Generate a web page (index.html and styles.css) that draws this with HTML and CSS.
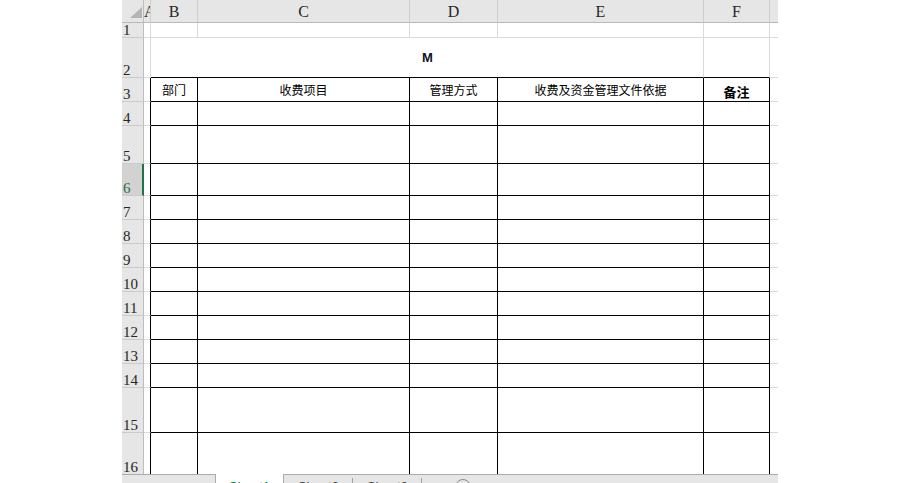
FILE: index.html
```html
<!DOCTYPE html>
<html lang="zh-CN">
<head>
    <meta charset="UTF-8">
    <meta name="viewport" content="width=device-width, initial-scale=1.0">
    <title>Sheet1</title>
    <link rel="stylesheet" href="styles.css">
</head>
<body>
    <div class="page">
        <div class="sheet">
            <!-- column letters -->
            <div class="row r-head">
                <div class="cell hd corner">
                    <svg width="12" height="11" viewBox="0 0 12 11"><polygon points="12,0 12,11 0,11" fill="#b4b4b4"/></svg>
                </div>
                <div class="cell col ca col-a">A</div>
                <div class="cell col cb">B</div>
                <div class="cell col cc">C</div>
                <div class="cell col cd">D</div>
                <div class="cell col ce">E</div>
                <div class="cell col cf">F</div>
                <div class="cell col cg"></div>
            </div>

            <div class="row h15">
                <div class="cell hd">1</div>
                <div class="cell ca"></div>
                <div class="cell cb"></div>
                <div class="cell cc"></div>
                <div class="cell cd"></div>
                <div class="cell ce"></div>
                <div class="cell cf"></div>
                <div class="cell cg"></div>
            </div>

            <div class="row h40">
                <div class="cell hd">2</div>
                <div class="cell ca"></div>
                <div class="cell merge top-edge"><span class="title">M</span></div>
                <div class="cell cf top-edge"></div>
                <div class="cell cg"></div>
            </div>

            <div class="row h24">
                <div class="cell hd">3</div>
                <div class="cell ca edge"></div>
                <div class="cell cb tb"><span class="txt">部门</span></div>
                <div class="cell cc tb"><span class="txt">收费项目</span></div>
                <div class="cell cd tb"><span class="txt">管理方式</span></div>
                <div class="cell ce tb"><span class="txt">收费及资金管理文件依据</span></div>
                <div class="cell cf tb bottom"><span class="txt strong">备注</span></div>
                <div class="cell cg"></div>
            </div>

            <div class="row h24">
                <div class="cell hd">4</div>
                <div class="cell ca edge"></div>
                <div class="cell cb tb"></div>
                <div class="cell cc tb"></div>
                <div class="cell cd tb"></div>
                <div class="cell ce tb"></div>
                <div class="cell cf tb"></div>
                <div class="cell cg"></div>
            </div>

            <div class="row h38">
                <div class="cell hd">5</div>
                <div class="cell ca edge"></div>
                <div class="cell cb tb"></div>
                <div class="cell cc tb"></div>
                <div class="cell cd tb"></div>
                <div class="cell ce tb"></div>
                <div class="cell cf tb"></div>
                <div class="cell cg"></div>
            </div>

            <div class="row h32">
                <div class="cell hd sel">6</div>
                <div class="cell ca edge"></div>
                <div class="cell cb tb"></div>
                <div class="cell cc tb"></div>
                <div class="cell cd tb"></div>
                <div class="cell ce tb"></div>
                <div class="cell cf tb"></div>
                <div class="cell cg"></div>
            </div>

            <div class="row h24">
                <div class="cell hd">7</div>
                <div class="cell ca edge"></div>
                <div class="cell cb tb"></div>
                <div class="cell cc tb"></div>
                <div class="cell cd tb"></div>
                <div class="cell ce tb"></div>
                <div class="cell cf tb"></div>
                <div class="cell cg"></div>
            </div>

            <div class="row h24">
                <div class="cell hd">8</div>
                <div class="cell ca edge"></div>
                <div class="cell cb tb"></div>
                <div class="cell cc tb"></div>
                <div class="cell cd tb"></div>
                <div class="cell ce tb"></div>
                <div class="cell cf tb"></div>
                <div class="cell cg"></div>
            </div>

            <div class="row h24">
                <div class="cell hd">9</div>
                <div class="cell ca edge"></div>
                <div class="cell cb tb"></div>
                <div class="cell cc tb"></div>
                <div class="cell cd tb"></div>
                <div class="cell ce tb"></div>
                <div class="cell cf tb"></div>
                <div class="cell cg"></div>
            </div>

            <div class="row h24">
                <div class="cell hd">10</div>
                <div class="cell ca edge"></div>
                <div class="cell cb tb"></div>
                <div class="cell cc tb"></div>
                <div class="cell cd tb"></div>
                <div class="cell ce tb"></div>
                <div class="cell cf tb"></div>
                <div class="cell cg"></div>
            </div>

            <div class="row h24">
                <div class="cell hd">11</div>
                <div class="cell ca edge"></div>
                <div class="cell cb tb"></div>
                <div class="cell cc tb"></div>
                <div class="cell cd tb"></div>
                <div class="cell ce tb"></div>
                <div class="cell cf tb"></div>
                <div class="cell cg"></div>
            </div>

            <div class="row h24">
                <div class="cell hd">12</div>
                <div class="cell ca edge"></div>
                <div class="cell cb tb"></div>
                <div class="cell cc tb"></div>
                <div class="cell cd tb"></div>
                <div class="cell ce tb"></div>
                <div class="cell cf tb"></div>
                <div class="cell cg"></div>
            </div>

            <div class="row h24">
                <div class="cell hd">13</div>
                <div class="cell ca edge"></div>
                <div class="cell cb tb"></div>
                <div class="cell cc tb"></div>
                <div class="cell cd tb"></div>
                <div class="cell ce tb"></div>
                <div class="cell cf tb"></div>
                <div class="cell cg"></div>
            </div>

            <div class="row h24">
                <div class="cell hd">14</div>
                <div class="cell ca edge"></div>
                <div class="cell cb tb"></div>
                <div class="cell cc tb"></div>
                <div class="cell cd tb"></div>
                <div class="cell ce tb"></div>
                <div class="cell cf tb"></div>
                <div class="cell cg"></div>
            </div>

            <div class="row h45">
                <div class="cell hd">15</div>
                <div class="cell ca edge"></div>
                <div class="cell cb tb"></div>
                <div class="cell cc tb"></div>
                <div class="cell cd tb"></div>
                <div class="cell ce tb"></div>
                <div class="cell cf tb"></div>
                <div class="cell cg"></div>
            </div>

            <div class="row h41 last">
                <div class="cell hd">16</div>
                <div class="cell ca edge"></div>
                <div class="cell cb tb"></div>
                <div class="cell cc tb"></div>
                <div class="cell cd tb"></div>
                <div class="cell ce tb"></div>
                <div class="cell cf tb"></div>
                <div class="cell cg"></div>
            </div>

            <!-- sheet tabs -->
            <div class="tabs">
                <div class="tab-nav"></div>
                <div class="tab active">Sheet1</div>
                <div class="tab">Sheet2</div>
                <div class="tab">Sheet3</div>
                <div class="tab-add"><span class="plus">+</span></div>
            </div>
        </div>
    </div>
</body>
</html>
```

FILE: styles.css
```css
html, body {
    margin: 0;
    padding: 0;
    background: #fff;
    overflow: hidden;
    height: 483px;
}

.page {
    padding-left: 122px;
}

.sheet {
    width: 656px;
}

.row {
    display: flex;
}

.r-head { height: 23px; }
.h15 { height: 15px; }
.h24 { height: 24px; }
.h32 { height: 32px; }
.h38 { height: 38px; }
.h40 { height: 40px; }
.h41 { height: 41px; }
.h45 { height: 45px; }

.cell {
    box-sizing: border-box;
    flex: none;
    display: flex;
    align-items: center;
    justify-content: center;
    border-right: 1px solid #dadada;
    border-bottom: 1px solid #dadada;
    overflow: hidden;
}

/* column widths */
.hd { width: 22px; }
.ca { width: 7px; }
.cb { width: 47px; }
.cc { width: 212px; }
.cd { width: 88px; }
.ce { width: 206px; }
.cf { width: 66px; }
.cg { width: 8px; border-right: 0; }
.merge { width: 553px; }

/* row numbers */
.hd {
    background: #e6e6e6;
    border-right-color: #bdbdbd;
    border-bottom-color: #cacaca;
    justify-content: flex-start;
    align-items: flex-end;
    padding-left: 1px;
    font-family: "Liberation Serif", serif;
    font-size: 15px;
    line-height: 14px;
    color: #262626;
    overflow: visible;
}

.hd.sel {
    background: #d2d2d2;
    border-right: 2px solid #217346;
    color: #217346;
}

.corner {
    justify-content: flex-end;
    align-items: flex-end;
    padding: 0 1px 4px 0;
    border-bottom-color: #b9b9b9;
}

.corner svg {
    display: block;
}

/* column letters */
.col {
    background: #e6e6e6;
    border-right-color: #cdcdcd;
    border-bottom-color: #b9b9b9;
    font-family: "Liberation Serif", serif;
    font-size: 16px;
    color: #262626;
    padding-top: 1px;
}

.col-a {
    justify-content: flex-start;
}

.cg.col {
    border-right: 0;
}

/* the bordered table */
.tb {
    border-right-color: #000;
    border-bottom-color: #000;
}

.edge {
    border-right-color: #000;
}

.top-edge {
    border-bottom-color: #000;
}

.last .cell {
    border-bottom: 0;
}

.bottom {
    align-items: flex-end;
    padding-bottom: 1px;
}

.txt {
    font-family: "Noto Sans CJK SC", sans-serif;
    font-size: 12px;
    line-height: 16px;
    color: #000;
}

.txt.strong {
    font-size: 13px;
    font-weight: bold;
}

.title {
    font-family: "Liberation Sans Narrow", "Liberation Sans", sans-serif;
    font-weight: bold;
    font-size: 13px;
    color: #0b1422;
    padding-left: 1px;
}

/* sheet tabs */
.tabs {
    display: flex;
    height: 28px;
    background: #e6e6e6;
    border-top: 1px solid #ababab;
    font-family: "Liberation Sans", sans-serif;
    font-size: 13px;
    line-height: 16px;
    color: #444;
}

.tab-nav {
    width: 93px;
}

.tab {
    position: relative;
    box-sizing: border-box;
    width: 69px;
    padding-top: 4px;
    text-align: center;
}

.tab::after {
    content: "";
    position: absolute;
    right: 0;
    top: 3px;
    bottom: 0;
    width: 1px;
    background: #a3a3a3;
}

.tab.active {
    width: 69px;
    margin-top: -1px;
    padding-top: 5px;
    background: #fff;
    border-left: 1px solid #ababab;
    border-right: 1px solid #ababab;
    color: #217346;
}

.tab.active::after {
    display: none;
}

.tab-add {
    padding: 4px 0 0 33px;
}

.plus {
    display: flex;
    align-items: center;
    justify-content: center;
    box-sizing: border-box;
    width: 16px;
    height: 16px;
    border: 1px solid #8c8c8c;
    border-radius: 50%;
    color: #666;
    font-size: 14px;
}
```
